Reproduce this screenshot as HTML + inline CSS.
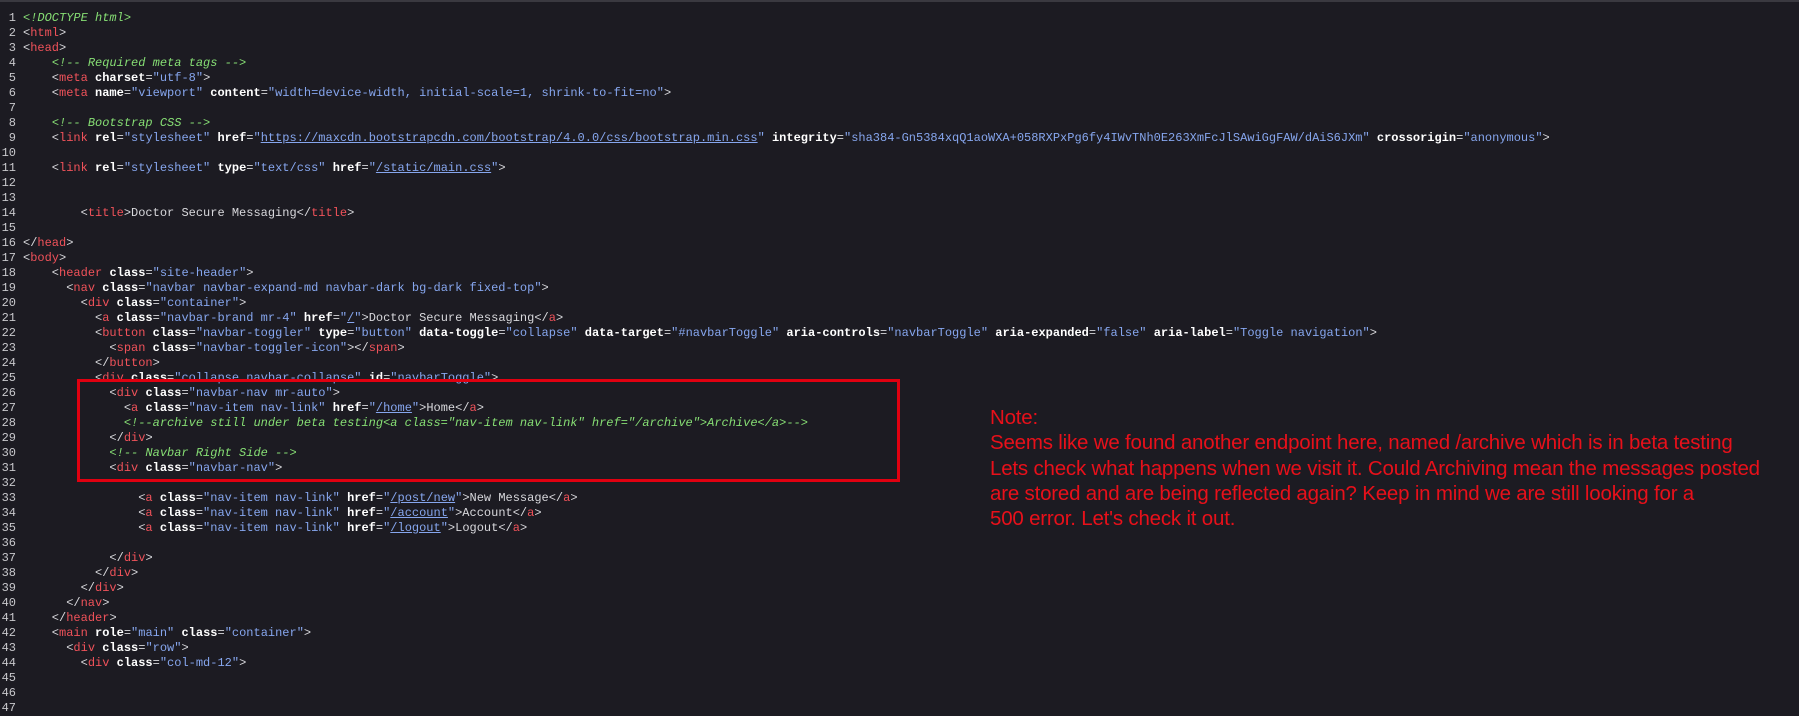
<!DOCTYPE html>
<html><head><meta charset="utf-8"><style>
html,body{margin:0;padding:0;background:#1c1b22;width:1799px;height:709px;overflow:hidden;}
body{border-top:2px solid #3a3940;box-sizing:border-box;}
pre{position:absolute;left:0;top:11px;margin:0;font:12px/15px "Liberation Mono","DejaVu Sans Mono",monospace;color:#d8d8dc;}
.n{display:inline-block;width:16px;text-align:right;color:#c8c8cc;margin-right:7px;}
.t{color:#f0525a}.a{color:#fff;font-weight:bold}.v{color:#86a6ee}.c{color:#86de74;font-style:italic}.u{color:#86a6ee;text-decoration:underline}
.box{position:absolute;left:77px;top:379px;width:817px;height:97px;border:3px solid #e00010;}
.note{position:absolute;left:990px;top:405px;font:20.5px/25.3px "Liberation Sans",sans-serif;color:#e8101a;letter-spacing:-0.2px;}
</style></head><body>
<pre><span class="n">1</span><span class="c">&lt;!DOCTYPE html&gt;</span>
<span class="n">2</span>&lt;<span class="t">html</span>&gt;
<span class="n">3</span>&lt;<span class="t">head</span>&gt;
<span class="n">4</span>    <span class="c">&lt;!-- Required meta tags --&gt;</span>
<span class="n">5</span>    &lt;<span class="t">meta</span> <span class="a">charset</span>=<span class="v">"utf-8"</span>&gt;
<span class="n">6</span>    &lt;<span class="t">meta</span> <span class="a">name</span>=<span class="v">"viewport"</span> <span class="a">content</span>=<span class="v">"width=device-width, initial-scale=1, shrink-to-fit=no"</span>&gt;
<span class="n">7</span>
<span class="n">8</span>    <span class="c">&lt;!-- Bootstrap CSS --&gt;</span>
<span class="n">9</span>    &lt;<span class="t">link</span> <span class="a">rel</span>=<span class="v">"stylesheet"</span> <span class="a">href</span>=<span class="v">"</span><span class="u">https://maxcdn.bootstrapcdn.com/bootstrap/4.0.0/css/bootstrap.min.css</span><span class="v">"</span> <span class="a">integrity</span>=<span class="v">"sha384-Gn5384xqQ1aoWXA+058RXPxPg6fy4IWvTNh0E263XmFcJlSAwiGgFAW/dAiS6JXm"</span> <span class="a">crossorigin</span>=<span class="v">"anonymous"</span>&gt;
<span class="n">10</span>
<span class="n">11</span>    &lt;<span class="t">link</span> <span class="a">rel</span>=<span class="v">"stylesheet"</span> <span class="a">type</span>=<span class="v">"text/css"</span> <span class="a">href</span>=<span class="v">"</span><span class="u">/static/main.css</span><span class="v">"</span>&gt;
<span class="n">12</span>
<span class="n">13</span>
<span class="n">14</span>        &lt;<span class="t">title</span>&gt;Doctor Secure Messaging&lt;/<span class="t">title</span>&gt;
<span class="n">15</span>
<span class="n">16</span>&lt;/<span class="t">head</span>&gt;
<span class="n">17</span>&lt;<span class="t">body</span>&gt;
<span class="n">18</span>    &lt;<span class="t">header</span> <span class="a">class</span>=<span class="v">"site-header"</span>&gt;
<span class="n">19</span>      &lt;<span class="t">nav</span> <span class="a">class</span>=<span class="v">"navbar navbar-expand-md navbar-dark bg-dark fixed-top"</span>&gt;
<span class="n">20</span>        &lt;<span class="t">div</span> <span class="a">class</span>=<span class="v">"container"</span>&gt;
<span class="n">21</span>          &lt;<span class="t">a</span> <span class="a">class</span>=<span class="v">"navbar-brand mr-4"</span> <span class="a">href</span>=<span class="v">"</span><span class="u">/</span><span class="v">"</span>&gt;Doctor Secure Messaging&lt;/<span class="t">a</span>&gt;
<span class="n">22</span>          &lt;<span class="t">button</span> <span class="a">class</span>=<span class="v">"navbar-toggler"</span> <span class="a">type</span>=<span class="v">"button"</span> <span class="a">data-toggle</span>=<span class="v">"collapse"</span> <span class="a">data-target</span>=<span class="v">"#navbarToggle"</span> <span class="a">aria-controls</span>=<span class="v">"navbarToggle"</span> <span class="a">aria-expanded</span>=<span class="v">"false"</span> <span class="a">aria-label</span>=<span class="v">"Toggle navigation"</span>&gt;
<span class="n">23</span>            &lt;<span class="t">span</span> <span class="a">class</span>=<span class="v">"navbar-toggler-icon"</span>&gt;&lt;/<span class="t">span</span>&gt;
<span class="n">24</span>          &lt;/<span class="t">button</span>&gt;
<span class="n">25</span>          &lt;<span class="t">div</span> <span class="a">class</span>=<span class="v">"collapse navbar-collapse"</span> <span class="a">id</span>=<span class="v">"navbarToggle"</span>&gt;
<span class="n">26</span>            &lt;<span class="t">div</span> <span class="a">class</span>=<span class="v">"navbar-nav mr-auto"</span>&gt;
<span class="n">27</span>              &lt;<span class="t">a</span> <span class="a">class</span>=<span class="v">"nav-item nav-link"</span> <span class="a">href</span>=<span class="v">"</span><span class="u">/home</span><span class="v">"</span>&gt;Home&lt;/<span class="t">a</span>&gt;
<span class="n">28</span>              <span class="c">&lt;!--archive still under beta testing&lt;a class="nav-item nav-link" href="/archive"&gt;Archive&lt;/a&gt;--&gt;</span>
<span class="n">29</span>            &lt;/<span class="t">div</span>&gt;
<span class="n">30</span>            <span class="c">&lt;!-- Navbar Right Side --&gt;</span>
<span class="n">31</span>            &lt;<span class="t">div</span> <span class="a">class</span>=<span class="v">"navbar-nav"</span>&gt;
<span class="n">32</span>
<span class="n">33</span>                &lt;<span class="t">a</span> <span class="a">class</span>=<span class="v">"nav-item nav-link"</span> <span class="a">href</span>=<span class="v">"</span><span class="u">/post/new</span><span class="v">"</span>&gt;New Message&lt;/<span class="t">a</span>&gt;
<span class="n">34</span>                &lt;<span class="t">a</span> <span class="a">class</span>=<span class="v">"nav-item nav-link"</span> <span class="a">href</span>=<span class="v">"</span><span class="u">/account</span><span class="v">"</span>&gt;Account&lt;/<span class="t">a</span>&gt;
<span class="n">35</span>                &lt;<span class="t">a</span> <span class="a">class</span>=<span class="v">"nav-item nav-link"</span> <span class="a">href</span>=<span class="v">"</span><span class="u">/logout</span><span class="v">"</span>&gt;Logout&lt;/<span class="t">a</span>&gt;
<span class="n">36</span>
<span class="n">37</span>            &lt;/<span class="t">div</span>&gt;
<span class="n">38</span>          &lt;/<span class="t">div</span>&gt;
<span class="n">39</span>        &lt;/<span class="t">div</span>&gt;
<span class="n">40</span>      &lt;/<span class="t">nav</span>&gt;
<span class="n">41</span>    &lt;/<span class="t">header</span>&gt;
<span class="n">42</span>    &lt;<span class="t">main</span> <span class="a">role</span>=<span class="v">"main"</span> <span class="a">class</span>=<span class="v">"container"</span>&gt;
<span class="n">43</span>      &lt;<span class="t">div</span> <span class="a">class</span>=<span class="v">"row"</span>&gt;
<span class="n">44</span>        &lt;<span class="t">div</span> <span class="a">class</span>=<span class="v">"col-md-12"</span>&gt;
<span class="n">45</span>
<span class="n">46</span>
<span class="n">47</span>
</pre>
<div class="box"></div>
<div class="note">Note:<br>Seems like we found another endpoint here, named /archive which is in beta testing<br>Lets check what happens when we visit it. Could Archiving mean the messages posted<br>are stored and are being reflected again? Keep in mind we are still looking for a<br>500 error. Let's check it out.</div>
</body></html>
